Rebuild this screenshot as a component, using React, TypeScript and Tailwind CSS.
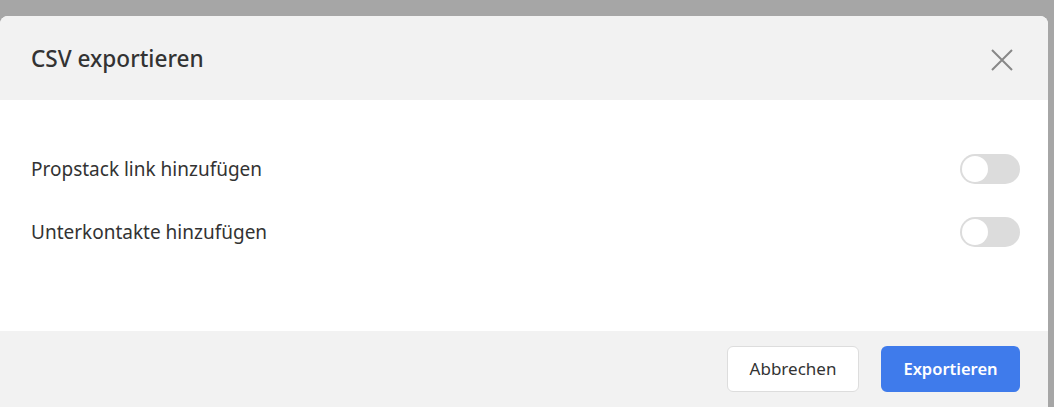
import React, { useState } from "react";

function Toggle() {
  const [on, setOn] = useState(false);
  return (
    <button
      onClick={() => setOn(!on)}
      className={`relative h-[30px] w-[60px] rounded-full ${on ? "bg-[#3f7beb]" : "bg-[#dcdcdc]"}`}
    >
      <span
        className={`absolute top-[2px] h-[26px] w-[26px] rounded-full bg-white ${on ? "left-[32px]" : "left-[2px]"}`}
      />
    </button>
  );
}

export default function App() {
  return (
    <div
      className="h-[407px] w-[1054px] overflow-hidden bg-[#a6a6a6] pt-[16px] pr-[6px]"
      style={{ fontFamily: '"Noto Sans", "Open Sans", sans-serif' }}
    >
      <div className="flex h-[400px] w-[1048px] flex-col overflow-hidden rounded-[8px] bg-white text-[#333333]">
        <div className="flex h-[84px] items-center justify-between bg-[#f2f2f2] pl-[31px] pr-[35px] pt-[3px]">
          <h2 className="text-[22.6px] font-medium leading-none">CSV exportieren</h2>
          <svg width="22" height="22" viewBox="0 0 22 22" className="text-[#888888]">
            <path d="M1 1L21 21M21 1L1 21" stroke="currentColor" strokeWidth="2" fill="none" />
          </svg>
        </div>
        <div className="flex h-[231px] flex-col gap-[33px] pl-[31px] pr-[28px] pt-[54px]">
          <div className="flex items-center justify-between">
            <span className="text-[19px] leading-none">Propstack link hinzufügen</span>
            <Toggle />
          </div>
          <div className="flex items-center justify-between">
            <span className="text-[19px] leading-none">Unterkontakte hinzufügen</span>
            <Toggle />
          </div>
        </div>
        <div className="flex flex-1 items-start justify-end gap-[22px] bg-[#f2f2f2] pr-[28px] pt-[15px]">
          <button className="h-[46px] w-[132px] rounded-[6px] border border-[#dddddd] bg-white text-[17px] text-[#333333]">
            Abbrechen
          </button>
          <button className="h-[46px] w-[139px] rounded-[6px] bg-[#3f7beb] text-[16.5px] font-semibold text-white">
            Exportieren
          </button>
        </div>
      </div>
    </div>
  );
}
